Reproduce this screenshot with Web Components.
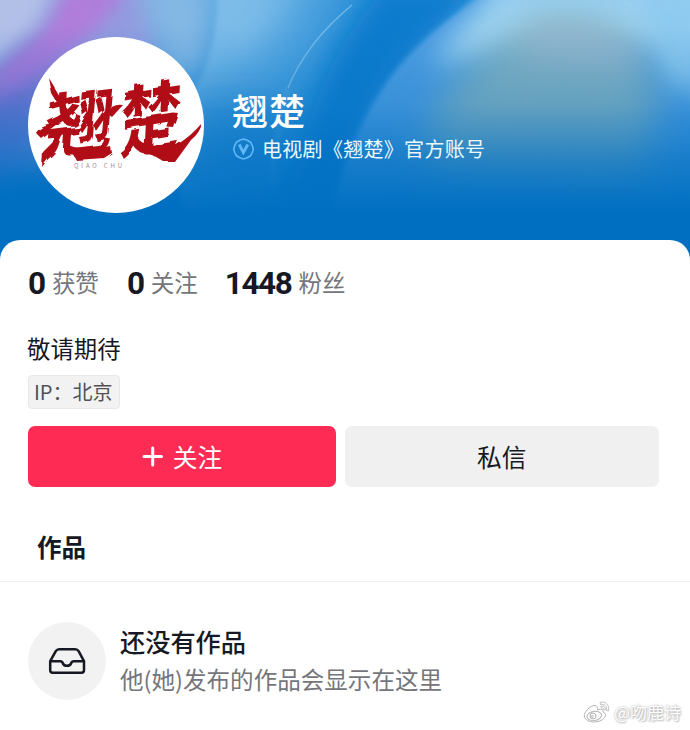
<!DOCTYPE html>
<html lang="zh-CN">
<head>
<meta charset="utf-8">
<title>翘楚</title>
<style>
  body {
    margin: 0;
    width: 690px;
    height: 730px;
    overflow: hidden;
    background: #fff;
    color: #161823;
    font-family: "Noto Sans CJK SC", sans-serif;
  }
</style>
</head>
<body>
<profile-page>
  <profile-header slot="header">
    <brush-avatar slot="avatar"></brush-avatar>
    <span slot="name">翘楚</span>
    <span slot="verified">电视剧《翘楚》官方账号</span>
  </profile-header>
  <stat-list>
    <stat-item count="0">获赞</stat-item>
    <stat-item count="0">关注</stat-item>
    <stat-item count="1448">粉丝</stat-item>
  </stat-list>
  <profile-bio>敬请期待<span slot="tag">IP：北京</span></profile-bio>
  <action-bar>
    <action-button primary>关注</action-button>
    <action-button>私信</action-button>
  </action-bar>
  <tab-title>作品</tab-title>
  <empty-state>
    <span slot="title">还没有作品</span>
    他(她)发布的作品会显示在这里
  </empty-state>
  <water-mark slot="mark">@吻鹿诗</water-mark>
</profile-page>

<script>
// small base class: every element here is just styles + markup
class BaseElement extends HTMLElement {
  constructor() {
    super();
    this.attachShadow({mode: 'open'});
    this.shadowRoot.innerHTML = this.render();
  }
}

class ProfilePage extends BaseElement {
  render() {
    return `
      <style>
        :host { display: block; position: relative; height: 730px; }
        main {
          position: relative;
          margin-top: -20px;
          height: 490px;
          border-radius: 20px 20px 0 0;
          background: #fff;
        }
      </style>
      <slot name="header"></slot>
      <main><slot></slot></main>
      <slot name="mark"></slot>
    `;
  }
}
customElements.define('profile-page', ProfilePage);

class ProfileHeader extends BaseElement {
  render() {
    return `
      <style>
        :host {
          display: flex;
          position: relative;
          box-sizing: border-box;
          height: 260px;
          padding: 37px 28px 0;
          gap: 28px;
          overflow: hidden;
          color: #fff;
        }
        .bg { position: absolute; left: 0; top: 0; }
        .info { position: relative; padding-top: 49px; }
        .name {
          font-size: 36px;
          line-height: 46px;
          font-weight: 500;
          letter-spacing: 1px;
        }
        .verified {
          display: flex;
          align-items: center;
          gap: 7px;
          margin-top: 3px;
          font-size: 20px;
          line-height: 28px;
          letter-spacing: .3px;
          color: #e9f8fb;
        }
      </style>
      <svg class="bg" width="690" height="260" viewBox="0 0 690 260">
        <defs>
          <linearGradient id="base" x1="0" y1="0" x2="0" y2="1">
            <stop offset="0" stop-color="#4aa3df"/>
            <stop offset=".4" stop-color="#3d96dc"/>
            <stop offset=".75" stop-color="#0070c2"/>
          </linearGradient>
          <linearGradient id="fade" x1="0" y1="0" x2="0" y2="1">
            <stop offset=".1" stop-color="#006fc1" stop-opacity="0"/>
            <stop offset=".4" stop-color="#006fc1" stop-opacity=".26"/>
            <stop offset=".62" stop-color="#006fc1" stop-opacity=".7"/>
            <stop offset=".82" stop-color="#006fc1"/>
          </linearGradient>
          <linearGradient id="band" gradientUnits="userSpaceOnUse" x1="225" y1="0" x2="370" y2="60">
            <stop offset="0" stop-color="#7cbce8"/>
            <stop offset=".5" stop-color="#4fa3df"/>
            <stop offset="1" stop-color="#1683d3"/>
          </linearGradient>
          <filter id="b2" x="-30%" y="-30%" width="160%" height="160%"><feGaussianBlur stdDeviation="2.5"/></filter>
          <filter id="b9" x="-50%" y="-50%" width="200%" height="200%"><feGaussianBlur stdDeviation="9"/></filter>
          <filter id="b12" x="-50%" y="-50%" width="200%" height="200%"><feGaussianBlur stdDeviation="13"/></filter>
          <filter id="b22" x="-50%" y="-50%" width="200%" height="200%"><feGaussianBlur stdDeviation="20"/></filter>
        </defs>
        <rect width="690" height="260" fill="url(#base)"/>
        <!-- pink and violet corner -->
        <path d="M-30 -30H170L160 60L90 170H-30Z" fill="#929bdf" filter="url(#b12)"/>
        <path d="M-30 70L60 30L40 150L-30 190Z" fill="#6e6fce" filter="url(#b22)"/>
        <path d="M70 -20H135L100 25L30 85L-10 102V74L45 30Z" fill="#b678da" filter="url(#b9)" opacity=".85"/>
        <path d="M-20 -20H58L38 25L-20 76Z" fill="#b2c0e8" filter="url(#b9)"/>
        <path d="M135 -20H215L205 70L175 90L160 50Z" fill="#84b8e4" filter="url(#b12)"/>
        <!-- light sheet in the middle -->
        <path d="M217 -10H490L340 260H180V110Q220 60 217 -10Z" fill="url(#band)" filter="url(#b2)"/>
        <path d="M225 -15H300L250 50L222 60Z" fill="#84c0ea" filter="url(#b12)" opacity=".6"/>
        <path d="M180 90L300 100L280 200H180Z" fill="#1f84d0" filter="url(#b22)" opacity=".7"/>
        <!-- deep blue fold -->
        <path d="M385 -10H485Q350 75 325 240H285Q305 70 385 -10Z" fill="#0d7bcd" filter="url(#b12)"/>
        <!-- right sheet -->
        <path d="M483 -5Q410 42 380 92Q338 155 322 260H720V-10Z" fill="#4e9de1" filter="url(#b2)"/>
        <path d="M500 -20H720V50H590L430 65Z" fill="#9bd1f1" filter="url(#b12)"/>
        <path d="M640 -10H710V100L660 80Z" fill="#8ecaf0" filter="url(#b12)"/>
        <path d="M425 170Q440 70 545 24Q630 15 650 85L640 185Z" fill="#80b2bc" filter="url(#b22)"/>
        <path d="M425 170Q450 80 545 28Q620 20 645 85L640 185Z" fill="#8bb2c2" filter="url(#b22)" opacity=".6"/>
        <path d="M530 30Q575 15 630 40L640 70L520 60Z" fill="#9ab8d2" filter="url(#b12)" opacity=".7"/>
        <path d="M352 5Q306 43 288 88" fill="none" stroke="#a9dcf2" stroke-width="1.6" opacity=".5"/>
        <path d="M288 88Q275 130 272 185" fill="none" stroke="#a9dcf2" stroke-width="3" opacity=".3" filter="url(#b2)"/>
        <rect width="690" height="260" fill="url(#fade)"/>
      </svg>
      <slot name="avatar"></slot>
      <div class="info">
        <div class="name"><slot name="name"></slot></div>
        <div class="verified">
          <svg width="23" height="24" viewBox="0 0 23 24" fill="none" stroke="#62b8f5">
            <path d="M11.5 2L15.3 3.3L18.7 5.4L20.4 8.8L21.3 12L20.4 15.3L18.5 18.8L15.2 20.7L11.5 22L7.8 20.7L4.5 18.8L2.6 15.3L1.7 12L2.6 8.8L4.3 5.4L7.7 3.3Z" stroke-width="1.6"/>
            <path d="M7.2 7.5L11.4 15.5L15.8 7.5" stroke-width="2.8"/>
          </svg>
          <slot name="verified"></slot>
        </div>
      </div>
    `;
  }
}
customElements.define('profile-header', ProfileHeader);

class BrushAvatar extends BaseElement {
  render() {
    return `
      <style>
        :host {
          display: block;
          position: relative;
          flex: none;
          width: 176px;
          height: 176px;
          border-radius: 50%;
          background: #fff;
          overflow: hidden;
        }
        svg { display: block; }
        text { font-family: "Noto Sans CJK SC", sans-serif; }
      </style>
      <svg width="176" height="176" viewBox="0 0 176 176">
        <defs>
          <filter id="rough" x="-10%" y="-10%" width="120%" height="120%">
            <feTurbulence type="fractalNoise" baseFrequency=".07" numOctaves="1" seed="4"/>
            <feDisplacementMap in="SourceGraphic" scale="6"/>
            <feGaussianBlur stdDeviation=".4"/>
          </filter>
        </defs>
        <g fill="#b10f17" filter="url(#rough)">
          <text transform="translate(15 116) rotate(-7) skewX(-12)" font-size="70" font-weight="700">翘</text>
          <text transform="translate(90 116) rotate(-9) skewX(-12) scale(.93 1.14)" font-size="67" font-weight="700">楚</text>
          <!-- ink tails round the lettering -->
          <path d="M20 40L33 62L29 66L23 56Z"/>
          <path d="M8 96Q12 88 33 86L22 94L13 101Z"/>
          <path d="M38 92Q28 113 14 130L15 115Z"/>
          <path d="M40 108Q60 116 83 110L84 116L76 121L48 123Z"/>
          <path d="M78 76Q85 66 95 68L84 80Z"/>
          <path d="M112 111Q136 118 150 107Q163 99 174 86Q172 96 163 103L147 125L136 125Z"/>
        </g>
        <text x="46" y="131" font-size="6" fill="#a08c90" textLength="48">QIAO CHU</text>
      </svg>
    `;
  }
}
customElements.define('brush-avatar', BrushAvatar);

class StatList extends BaseElement {
  render() {
    return `
      <style>
        :host { display: flex; gap: 28px; padding: 24px 28px 0; height: 38px; }
      </style>
      <slot></slot>
    `;
  }
}
customElements.define('stat-list', StatList);

class StatItem extends BaseElement {
  render() {
    return `
      <style>
        :host { display: flex; align-items: center; gap: 7px; font-size: 23.5px; line-height: 34px; color: #75767b; }
        b {
          padding-top: 2px;
          font: 700 31.5px/38px Roboto, sans-serif;
          letter-spacing: -1.2px;
          color: #161823;
        }
        .label { padding-bottom: 2px; }
        :host([count="1448"]) { margin-left: -1px; }
        :host([count="1448"]) b { letter-spacing: -1.4px; }
      </style>
      <b>${this.getAttribute('count')}</b>
      <span class="label"><slot></slot></span>
    `;
  }
}
customElements.define('stat-item', StatItem);

class ProfileBio extends BaseElement {
  render() {
    return `
      <style>
        :host { display: block; padding: 29px 27px 0; font-size: 23.4px; line-height: 34px; }
        .tag {
          box-sizing: border-box;
          width: 92px;
          height: 34px;
          margin: 10px 0 0 1px;
          padding-left: 5px;
          border: 1px solid #e8e8e8;
          border-radius: 4px;
          background: #f2f2f2;
          font-size: 20px;
          line-height: 31px;
          white-space: nowrap;
          color: #505158;
        }
      </style>
      <slot></slot>
      <div class="tag"><slot name="tag"></slot></div>
    `;
  }
}
customElements.define('profile-bio', ProfileBio);

class ActionBar extends BaseElement {
  render() {
    return `
      <style>
        :host {
          display: grid;
          grid-template-columns: 308px 313.5px;
          gap: 9px;
          padding: 17px 28px 0;
        }
      </style>
      <slot></slot>
    `;
  }
}
customElements.define('action-bar', ActionBar);

class ActionButton extends BaseElement {
  render() {
    return `
      <style>
        :host {
          display: flex;
          align-items: center;
          justify-content: center;
          gap: 10px;
          height: 61px;
          border-radius: 7px;
          background: #f0f0f0;
          font-size: 24.7px;
          line-height: 36px;
        }
        :host([primary]) { background: #fe2c55; color: #fff; }
        svg { display: none; }
        :host([primary]) svg { display: block; }
        .label { padding-bottom: 2px; }
      </style>
      <svg width="21" height="21" viewBox="0 0 21 21" stroke="#fff" stroke-width="3" stroke-linecap="round">
        <path d="M2 10.5H19.5M10.7 2V19"/>
      </svg>
      <span class="label"><slot></slot></span>
    `;
  }
}
customElements.define('action-button', ActionButton);

class TabTitle extends BaseElement {
  render() {
    return `
      <style>
        :host {
          display: block;
          padding: 41px 37px 16px;
          border-bottom: 1px solid #f0f0f0;
          font-size: 24.5px;
          line-height: 37px;
          font-weight: 700;
        }
      </style>
      <slot></slot>
    `;
  }
}
customElements.define('tab-title', TabTitle);

class EmptyState extends BaseElement {
  render() {
    return `
      <style>
        :host { display: flex; align-items: center; gap: 14px; padding: 40px 28px 0; }
        .icon {
          display: flex;
          align-items: center;
          justify-content: center;
          width: 78px;
          height: 78px;
          border-radius: 50%;
          background: #f2f2f3;
        }
        .info { padding-bottom: 2px; }
        .title { font-size: 25.2px; line-height: 38px; font-weight: 500; }
        .text { font-size: 23.55px; line-height: 38px; color: #75767b; white-space: nowrap; }
      </style>
      <div class="icon">
        <svg width="38" height="28" viewBox="0 0 38 28" fill="none" stroke="#161823" stroke-width="2.5" stroke-linejoin="round">
          <path d="M2.2 14.2L7.8 4.2Q9 2.2 11.2 2.2H27.2Q29.4 2.2 30.6 4.2L36 14.2V23.3Q36 25.7 33.6 25.7H4.6Q2.2 25.7 2.2 23.3Z"/>
          <path d="M2.2 14.2H12.2Q14.2 14.2 14.7 16Q15.6 18.8 19 18.8Q22.4 18.8 23.3 16Q23.8 14.2 25.8 14.2H36"/>
        </svg>
      </div>
      <div class="info">
        <div class="title"><slot name="title"></slot></div>
        <div class="text"><slot></slot></div>
      </div>
    `;
  }
}
customElements.define('empty-state', EmptyState);

class WaterMark extends BaseElement {
  render() {
    return `
      <style>
        :host {
          display: flex;
          position: absolute;
          right: 9px;
          bottom: 6px;
          align-items: center;
          gap: 3px;
          font-size: 17px;
          line-height: 25px;
          color: #fff;
          text-shadow: 0 0 2px #aaa, 1px 1px 2px #bbb;
        }
      </style>
      <svg width="28" height="25" viewBox="0 0 28 25" fill="#fff" stroke="#b4b4b4" stroke-width="1">
        <path d="M11 6.5C7 7 1 13 1.3 17C1.7 21 6.5 23.2 11.5 23C18 22.7 23 19 22.5 15.5C22.2 13.7 20.5 13.5 20 13C20.7 10.5 19 9.5 14.5 11C14.5 8.5 14.2 6.3 11 6.5Z"/>
        <ellipse cx="11.3" cy="17" rx="7.3" ry="4.6" transform="rotate(-8 11 17)"/>
        <circle cx="10" cy="17" r="3"/>
        <circle cx="9.3" cy="17.5" r="1"/>
        <path d="M17 3.5C22 1.5 27 6 25.5 12L23.5 11.5C24.5 7.5 21.5 4.5 17.5 5.5ZM18 7.2C21 6.5 23 8.5 22.2 11L20.5 10.5C20.8 9.2 19.8 8.6 18.3 8.9Z" stroke-width=".8"/>
      </svg>
      <slot></slot>
    `;
  }
}
customElements.define('water-mark', WaterMark);
</script>
</body>
</html>
